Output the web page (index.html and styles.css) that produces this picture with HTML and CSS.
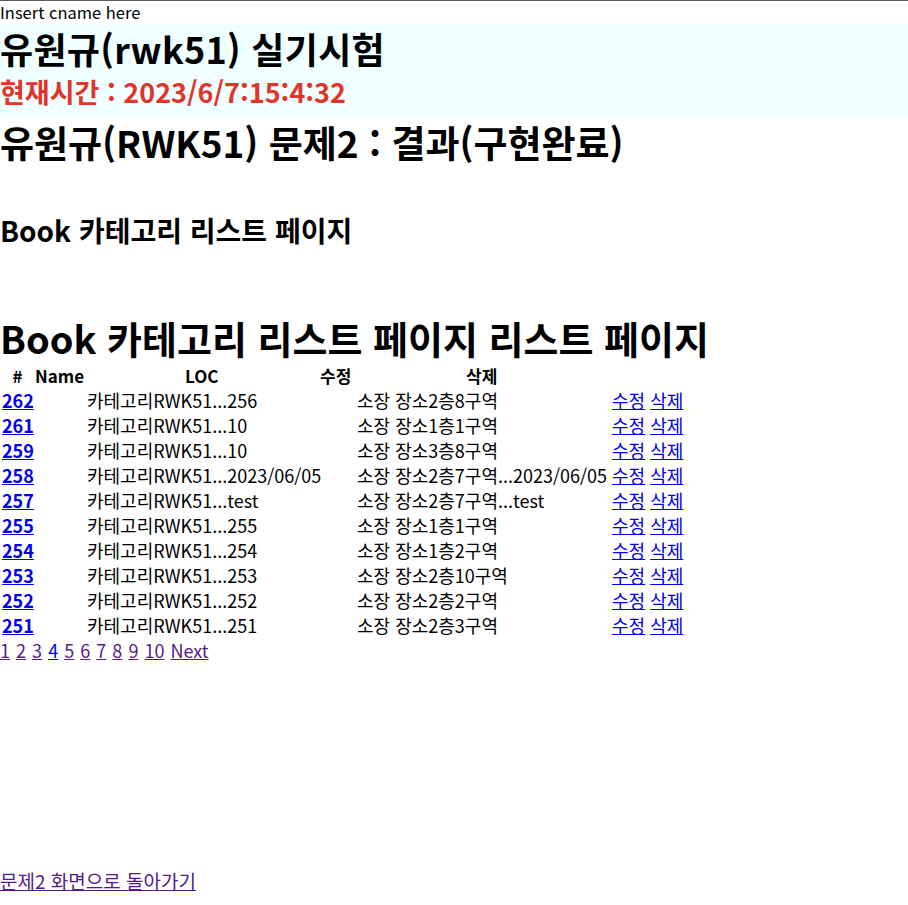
FILE: index.html
```html
<!DOCTYPE html>
<html lang="ko">
<head>
<meta charset="utf-8">
<title>Book 카테고리 리스트 페이지</title>
<link rel="stylesheet" href="styles.css">
</head>
<body>
<div class="topbar">Insert cname here</div>
<header class="hero">
  <h1 class="hero-title">유원규(rwk51) 실기시험</h1>
  <h2 class="hero-time">현재시간 : 2023/6/7:15:4:32</h2>
</header>
<h1 class="title">유원규(RWK51) 문제2 : 결과(구현완료)</h1>
<h3 class="sub">Book 카테고리 리스트 페이지</h3>
<h1 class="big">Book 카테고리 리스트 페이지 리스트 페이지</h1>
<div class="list">
  <div class="list-head">
    <span class="h-num">#</span>
    <span>Name</span>
    <span>LOC</span>
    <span>수정</span>
    <span>삭제</span>
  </div>
  <div class="row"><a class="id" href="#">262</a><span>카테고리RWK51...256</span><span class="loc">소장 장소2층8구역</span><span class="acts"><a href="#">수정</a> <a href="#">삭제</a></span></div>
  <div class="row"><a class="id" href="#">261</a><span>카테고리RWK51...10</span><span class="loc">소장 장소1층1구역</span><span class="acts"><a href="#">수정</a> <a href="#">삭제</a></span></div>
  <div class="row"><a class="id" href="#">259</a><span>카테고리RWK51...10</span><span class="loc">소장 장소3층8구역</span><span class="acts"><a href="#">수정</a> <a href="#">삭제</a></span></div>
  <div class="row"><a class="id" href="#">258</a><span>카테고리RWK51...2023/06/05</span><span class="loc">소장 장소2층7구역...2023/06/05</span><span class="acts"><a href="#">수정</a> <a href="#">삭제</a></span></div>
  <div class="row"><a class="id" href="#">257</a><span>카테고리RWK51...test</span><span class="loc">소장 장소2층7구역...test</span><span class="acts"><a href="#">수정</a> <a href="#">삭제</a></span></div>
  <div class="row"><a class="id" href="#">255</a><span>카테고리RWK51...255</span><span class="loc">소장 장소1층1구역</span><span class="acts"><a href="#">수정</a> <a href="#">삭제</a></span></div>
  <div class="row"><a class="id" href="#">254</a><span>카테고리RWK51...254</span><span class="loc">소장 장소1층2구역</span><span class="acts"><a href="#">수정</a> <a href="#">삭제</a></span></div>
  <div class="row"><a class="id" href="#">253</a><span>카테고리RWK51...253</span><span class="loc">소장 장소2층10구역</span><span class="acts"><a href="#">수정</a> <a href="#">삭제</a></span></div>
  <div class="row"><a class="id" href="#">252</a><span>카테고리RWK51...252</span><span class="loc">소장 장소2층2구역</span><span class="acts"><a href="#">수정</a> <a href="#">삭제</a></span></div>
  <div class="row"><a class="id" href="#">251</a><span>카테고리RWK51...251</span><span class="loc">소장 장소2층3구역</span><span class="acts"><a href="#">수정</a> <a href="#">삭제</a></span></div>
</div>
<div class="pager"><a class="v" href="#">1</a> <a class="v" href="#">2</a> <a class="v" href="#">3</a> <a href="#">4</a> <a class="v" href="#">5</a> <a class="v" href="#">6</a> <a class="v" href="#">7</a> <a class="v" href="#">8</a> <a class="v" href="#">9</a> <a class="v" href="#">10</a> <a class="v" href="#">Next</a></div>
<div class="back"><a class="v" href="#">문제2 화면으로 돌아가기</a></div>
</body>
</html>
```

FILE: styles.css
```css
html, body {
  margin: 0;
  padding: 0;
  background: #ffffff;
}
body {
  font-family: "Noto Sans CJK KR", "Noto Sans", sans-serif;
  font-size: 16px;
  color: #000000;
}
a {
  color: #0000ee;
}
a.v {
  color: #551a8b;
}
.topbar {
  border-top: 1px solid #5a5a5a;
  height: 23px;
  line-height: 23px;
  font-size: 16.5px;
  white-space: nowrap;
}
.hero {
  background: #f0ffff;
  height: 93px;
  display: flex;
  flex-direction: column;
}
.hero-title {
  margin: 0;
  font-size: 36px;
  line-height: 48px;
  font-weight: bold;
  letter-spacing: 0.3px;
  white-space: nowrap;
}
.hero-time {
  margin: 0;
  font-size: 27px;
  line-height: 40px;
  font-weight: bold;
  color: #e0352b;
  white-space: nowrap;
}
.title {
  margin: 0;
  font-size: 37px;
  line-height: 50px;
  font-weight: bold;
  white-space: nowrap;
}
.sub {
  margin: 48px 0 0;
  font-size: 28px;
  line-height: 30px;
  font-weight: bold;
  white-space: nowrap;
}
.big {
  margin: 68px 0 0;
  font-size: 38px;
  line-height: 50px;
  font-weight: bold;
  white-space: nowrap;
}
.list-head {
  display: grid;
  grid-template-columns: 35px 150px 135px 146px auto;
  height: 25px;
  line-height: 25px;
  font-size: 17px;
  font-weight: bold;
}
.h-num {
  text-align: center;
}
.row {
  display: grid;
  grid-template-columns: 87px 270px 255px auto;
  height: 25px;
  line-height: 25px;
  font-size: 18px;
  white-space: nowrap;
}
.row .id {
  padding-left: 2px;
  font-weight: bold;
}
.row .id, .acts {
  justify-self: start;
}
.pager {
  height: 25px;
  line-height: 25px;
  font-size: 18px;
  word-spacing: 1px;
}
.back {
  margin-top: 205px;
  height: 25px;
  line-height: 25px;
  font-size: 19px;
}
```
